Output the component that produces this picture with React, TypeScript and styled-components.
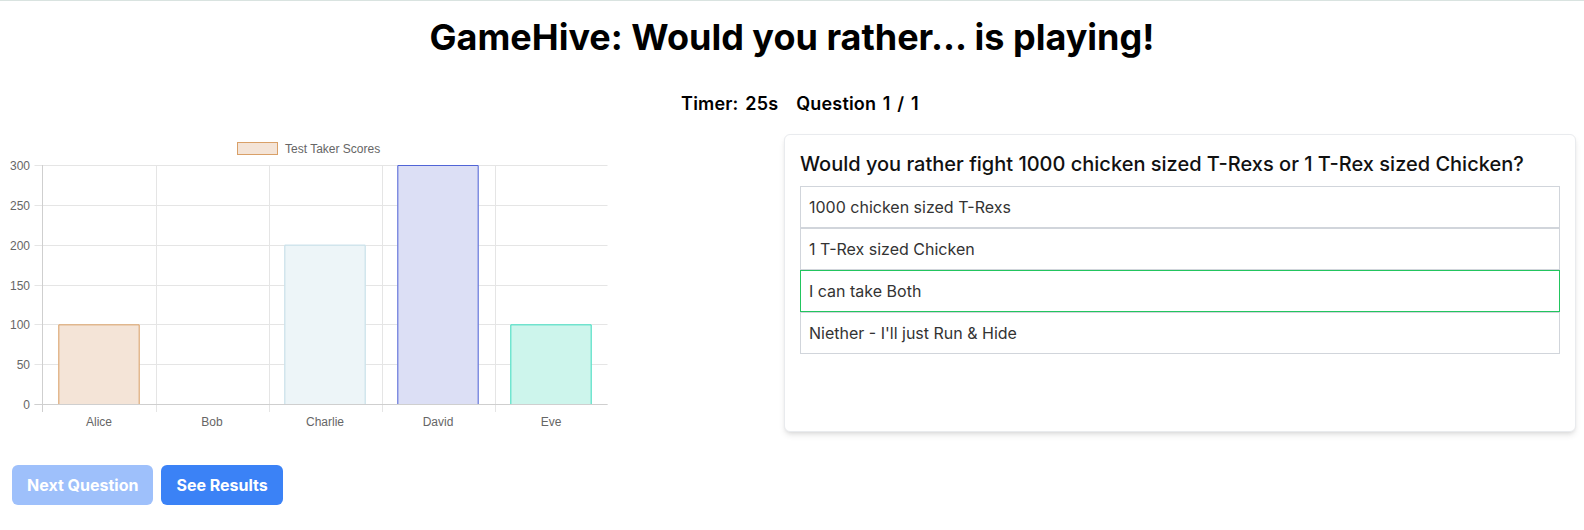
import React from "react";
import styled, { createGlobalStyle } from "styled-components";

const GlobalStyle = createGlobalStyle`
  html, body { margin: 0; padding: 0; background: #ffffff; }
  body { font-family: Inter, "Noto Sans", sans-serif; color: #000; }
  * { box-sizing: border-box; }
`;

const Page = styled.div`
  border-top: 1px solid #d9e3e0;
  padding: 0 8px;
  width: 1584px;
`;

const Title = styled.h1`
  margin: 16px 0 0;
  font-size: 36px;
  line-height: 40px;
  font-weight: 700;
  text-align: center;
  color: #000;
`;

const StatusRow = styled.div`
  margin-top: 33px;
  display: flex;
  justify-content: center;
  gap: 18px;
  padding-left: 16px;
  font-size: 18px;
  line-height: 28px;
  font-weight: 600;
  letter-spacing: 0.01em;
  word-spacing: 2px;
  color: #000;
`;

const MainRow = styled.div`
  margin-top: 14px;
  display: grid;
  grid-template-columns: 760px 1fr;
  column-gap: 16px;
  align-items: stretch;
`;

const ChartWrap = styled.div`
  height: 300px;
`;

const Card = styled.div`
  margin-top: 2px;
  background: #fff;
  border: 1px solid #e9ebee;
  border-radius: 6px;
  box-shadow: 0 4px 6px -1px rgba(0, 0, 0, 0.1), 0 2px 4px -2px rgba(0, 0, 0, 0.1);
  padding: 15px;
`;

const Question = styled.h2`
  margin: 0 0 8px;
  font-size: 20px;
  line-height: 28px;
  font-weight: 500;
  color: #111;
`;

const OptionList = styled.div`
  display: flex;
  flex-direction: column;
`;

const Option = styled.div<{ $selected?: boolean }>`
  border: 1px solid ${(p) => (p.$selected ? "#22c55e" : "#d1d5db")};
  padding: 8px;
  font-size: 16px;
  line-height: 24px;
  color: #333;
`;

const ButtonRow = styled.div`
  margin-top: 33px;
  padding-left: 4px;
  display: flex;
  gap: 8px;
`;

const Button = styled.button<{ $disabled?: boolean }>`
  font-family: Inter, "Noto Sans", sans-serif;
  font-size: 16px;
  line-height: 24px;
  font-weight: 700;
  color: #fff;
  background: ${(p) => (p.$disabled ? "#9ec0fb" : "#3b82f6")};
  border: none;
  border-radius: 6px;
  padding: 8px 15px;
  cursor: ${(p) => (p.$disabled ? "not-allowed" : "pointer")};
`;

type Bar = { name: string; value: number; fill: string; stroke: string };

const data: Bar[] = [
  { name: "Alice", value: 100, fill: "#f4e4d7", stroke: "#d9a068" },
  { name: "Bob", value: 0, fill: "#eef4f8", stroke: "#c3dde6" },
  { name: "Charlie", value: 200, fill: "#edf5f8", stroke: "#c3dde6" },
  { name: "David", value: 300, fill: "#dcdff5", stroke: "#5064d6" },
  { name: "Eve", value: 100, fill: "#cdf5ec", stroke: "#40dcc0" },
];

const ScoreChart: React.FC = () => {
  const left = 34.5;
  const right = 599.5;
  const top = 33;
  const bottom = 272;
  const cat = (right - left) / data.length;
  const barW = cat * 0.72;
  const yOf = (v: number) => bottom - (v / 300) * (bottom - top);
  const ticks = [0, 50, 100, 150, 200, 250, 300];
  const font = { fontFamily: '"Liberation Sans", Arial, sans-serif', fontSize: 12, fill: "#666" };
  return (
    <svg width={600} height={300} viewBox="0 0 600 300">
      <rect x={229.5} y={10.5} width={40} height={12} fill={data[0].fill} stroke={data[0].stroke} strokeWidth={1} />
      <text x={277} y={20.5} {...font}>Test Taker Scores</text>
      {ticks.map((t) => (
        <g key={t}>
          <line x1={left - 8} x2={right} y1={Math.round(yOf(t)) + 0.5} y2={Math.round(yOf(t)) + 0.5} stroke="#e5e5e5" />
          <text x={22} y={Math.round(yOf(t)) + 4.5} textAnchor="end" {...font}>{t}</text>
        </g>
      ))}
      {data.map((_, i) => (
        <line key={i} x1={Math.round(left + cat * (i + 1)) + 0.5} x2={Math.round(left + cat * (i + 1)) + 0.5} y1={top} y2={bottom + 8} stroke="#e5e5e5" />
      ))}
      <line x1={left} x2={left} y1={top} y2={bottom + 8} stroke="#cfcfcf" />
      <line x1={left - 8} x2={right} y1={bottom + 0.5} y2={bottom + 0.5} stroke="#cfcfcf" />
      {data.map((d, i) => {
        const cx = left + cat * (i + 0.5);
        const x0 = cx - barW / 2;
        const x1 = cx + barW / 2;
        const y = yOf(d.value);
        return (
          <g key={d.name}>
            {d.value > 0 && (
              <>
                <rect x={x0} y={y} width={barW} height={bottom - y} fill={d.fill} />
                <path d={`M${x0 + 0.5} ${bottom} V${y + 0.5} H${x1 - 0.5} V${bottom}`} fill="none" stroke={d.stroke} strokeWidth={1} />
              </>
            )}
            <text x={cx} y={294} textAnchor="middle" {...font}>{d.name}</text>
          </g>
        );
      })}
    </svg>
  );
};

const options = [
  "1000 chicken sized T-Rexs",
  "1 T-Rex sized Chicken",
  "I can take Both",
  "Niether - I'll just Run & Hide",
];

export default function App() {
  return (
    <>
      <GlobalStyle />
      <Page>
        <Title>GameHive: Would you rather... is playing!</Title>
        <StatusRow>
          <span>Timer: 25s</span>
          <span>Question 1 / 1</span>
        </StatusRow>
        <MainRow>
          <ChartWrap>
            <ScoreChart />
          </ChartWrap>
          <Card>
            <Question>Would you rather fight 1000 chicken sized T-Rexs or 1 T-Rex sized Chicken?</Question>
            <OptionList>
              {options.map((o, i) => (
                <Option key={o} $selected={i === 2}>{o}</Option>
              ))}
            </OptionList>
          </Card>
        </MainRow>
        <ButtonRow>
          <Button $disabled>Next Question</Button>
          <Button>See Results</Button>
        </ButtonRow>
      </Page>
    </>
  );
}
